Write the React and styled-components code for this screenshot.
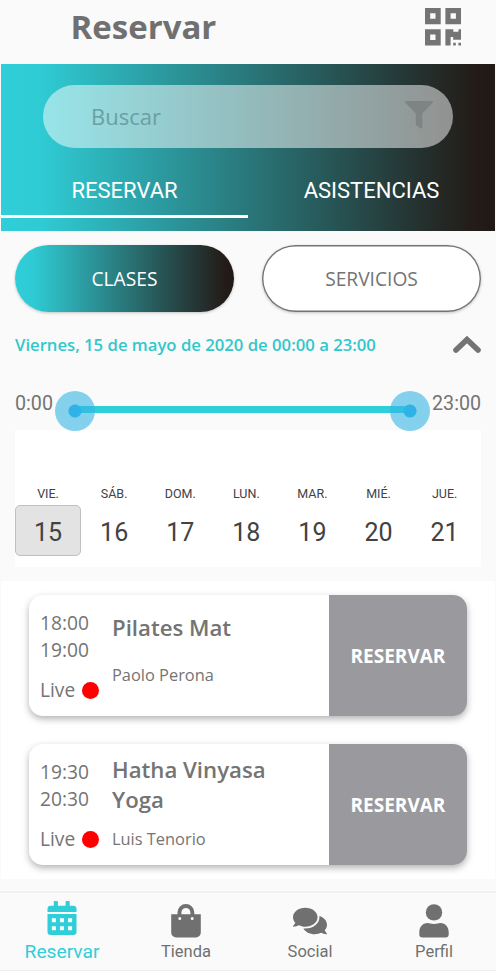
import React, { useState } from 'react';
import styled, { createGlobalStyle } from 'styled-components';
import { FaComments } from 'react-icons/fa';

const GlobalStyle = createGlobalStyle`
  * {
    box-sizing: border-box;
  }

  body {
    margin: 0;
    background-color: #fafafa;
    color: #747474;
    font-family: "Open Sans", "Noto Sans", sans-serif;
  }

  button, input {
    font-family: inherit;
    padding: 0;
    border: none;
    background: none;
    color: inherit;
  }
`;

const roboto = 'Roboto, "Liberation Sans", sans-serif';
const degradado = 'linear-gradient(90deg, #2fced8 0%, #2fcbd4 8%, #231b17 96%, #1f1a17 100%)';

const Pantalla = styled.div`
  width: 100%;
  height: 971px;
  display: flex;
  flex-direction: column;
  overflow: hidden;
`;

const Cabecera = styled.header`
  height: 64px;
  padding: 0 34px 10px 70.5px;
  display: flex;
  justify-content: space-between;
  align-items: center;
`;

const Titulo = styled.h1`
  margin: 0;
  font-size: 33px;
  font-weight: 700;
  line-height: 40px;
  color: #707070;
`;

const BotonIcono = styled.button`
  display: flex;
  color: #747474;
`;

const Banner = styled.section`
  height: 167px;
  margin: 0 1px;
  padding-top: 21px;
  background: ${degradado};
`;

const Buscador = styled.div`
  height: 63px;
  margin: 0 42px;
  padding: 0 20px 0 48px;
  display: flex;
  align-items: center;
  border-radius: 32px;
  background-color: rgba(255, 255, 255, 0.5);

  svg {
    margin-bottom: 3px;
    color: #7d8483;
  }
`;

const Entrada = styled.input`
  flex: 1;
  min-width: 0;
  margin-bottom: 1px;
  font-size: 22px;
  outline: none;

  &::placeholder {
    color: #6aa0a2;
    opacity: 1;
  }
`;

const Pestanas = styled.div`
  display: grid;
  grid-template-columns: 1fr 1fr;
  margin-top: 16px;
`;

const Pestana = styled.button`
  height: 54px;
  padding: 2px 0 0;
  border-bottom: 3px solid ${({ $activa }) => ($activa ? '#fff' : 'transparent')};
  color: #fff;
  font-family: ${roboto};
  font-size: 22px;
`;

const Filtros = styled.div`
  display: grid;
  grid-template-columns: 1fr 1fr;
  gap: 28px;
  margin: 14px 15px 0;
`;

const Filtro = styled.button`
  height: 67px;
  border-radius: 34px;
  background: ${({ $activo }) => ($activo ? degradado : '#fff')};
  color: ${({ $activo }) => ($activo ? '#fff' : '#747474')};
  font-size: 19.2px;
  box-shadow: ${({ $activo }) => ($activo ? '' : 'inset 0 0 0 1.4px #747474,')} 0 1px 3px rgba(0, 0, 0, 0.22);
`;

const FilaFecha = styled.div`
  height: 65px;
  padding: 0 15px;
  display: flex;
  justify-content: space-between;
  align-items: center;
`;

const Fecha = styled.span`
  padding-bottom: 1px;
  color: #30c8cc;
  font-size: 16.7px;
  font-weight: 600;
`;

const Rango = styled.div`
  height: 52px;
  padding: 0 15px;
  display: flex;
  align-items: center;
  justify-content: space-between;
  font-family: ${roboto};
  font-size: 19.7px;
`;

const Hora = styled.span`
  width: ${({ $ancho }) => $ancho};
  text-align: right;
`;

const Deslizador = styled.div`
  position: relative;
  flex: 1;
  height: 7px;
  margin: 12px 22px 0 22px;
  background-color: #2fced8;
`;

const Tirador = styled.span`
  position: absolute;
  top: 5px;
  left: ${({ $posicion }) => $posicion};
  width: 40px;
  height: 40px;
  margin: -20px 0 0 -20px;
  border-radius: 50%;
  background: radial-gradient(circle, #2fb3e6 6px, rgba(53, 181, 229, 0.6) 7px);
`;

const Calendario = styled.div`
  height: 137px;
  margin: 1px 15px 0;
  padding-top: 54px;
  display: grid;
  grid-template-columns: repeat(7, 66.1px);
  align-content: start;
  background-color: #fff;
  font-family: ${roboto};
  color: #424242;
`;

const Dia = styled.div`
  display: flex;
  flex-direction: column;
  align-items: center;
`;

const NombreDia = styled.span`
  height: 21px;
  font-size: 12.5px;
  line-height: 19px;
`;

const NumeroDia = styled.button`
  width: 66px;
  height: 51px;
  padding-top: 3px;
  border: 1px solid ${({ $activo }) => ($activo ? '#c0c0c0' : 'transparent')};
  border-radius: 5px;
  background-color: ${({ $activo }) => ($activo ? '#e3e3e3' : 'transparent')};
  font-size: 25px;
`;

const Lista = styled.main`
  height: 298px;
  margin: 14px 1px 0;
  padding: 14px 28px;
  display: flex;
  flex-direction: column;
  gap: 28px;
  background-color: #fff;
`;

const Tarjeta = styled.article`
  height: 121px;
  display: flex;
  border-radius: 14px;
  background-color: #fff;
  box-shadow: 0 3px 7px rgba(0, 0, 0, 0.3);
  overflow: hidden;
`;

const Horario = styled.div`
  width: 83px;
  padding: 15px 0 0 11px;
  font-size: 19.2px;
  line-height: 26.5px;
`;

const Directo = styled.div`
  display: flex;
  align-items: center;
  gap: 7px;
  margin-top: 14px;
`;

const Punto = styled.span`
  width: 17px;
  height: 17px;
  margin-top: 1px;
  border-radius: 50%;
  background-color: #f00;
`;

const Detalle = styled.div`
  width: 217px;
  padding: 0 40px 15px 0;
  display: flex;
  flex-direction: column;
  justify-content: space-between;
`;

const NombreClase = styled.h2`
  margin: 0;
  padding-top: ${({ $larga }) => ($larga ? '11px' : '18px')};
  font-size: 22.2px;
  font-weight: 600;
  line-height: 30px;
`;

const Profesor = styled.span`
  font-size: 16.4px;
  line-height: 22px;
  margin-bottom: ${({ $larga }) => ($larga ? '0' : '15px')};
`;

const BotonReservar = styled.button`
  flex: 1;
  background-color: #9a999d;
  color: #fff;
  font-size: 19px;
  font-weight: 700;
`;

const Navegacion = styled.nav`
  height: 80px;
  margin-top: 12px;
  border-top: 2px solid #f0f0f0;
  border-bottom: 1px solid #eee;
  display: grid;
  grid-template-columns: repeat(4, 1fr);
`;

const Enlace = styled.a`
  height: 70px;
  display: flex;
  flex-direction: column;
  align-items: center;
  justify-content: flex-end;
  gap: ${({ $activo }) => ($activo ? '5px' : '3px')};
  color: ${({ $activo }) => ($activo ? '#2fced8' : '#707070')};
  font-family: ${roboto};
  font-size: ${({ $activo }) => ($activo ? '19.2px' : '16.5px')};
  line-height: ${({ $activo }) => ($activo ? '23px' : '22px')};
`;

const IconoQr = () => (
    <svg width="37" height="38" viewBox="0 0 37 38" fill="currentColor">
        <path
            fillRule="evenodd"
            d="M0 0h15.7v16.2H0zM5.2 5.3v5.5h5.3V5.3zM20.4 0H36v16.2H20.4zM25.6 5.3v5.5h5.3V5.3zM0 21.2h15.7v16.2H0zM5.2 26.5V32h5.3v-5.5z"
        />
        <path d="M20.4 21.2h7.9v2.6h5.2v-2.6H36v10.500h-7.800v-2.600h-2.600v8.300h-5.200zM28.200 34.800h2.600v2.600h-2.600zM33.400 34.800H36v2.600h-2.600z" />
    </svg>
);

const IconoFiltro = () => (
    <svg width="28" height="28" viewBox="0 0 28 28" fill="currentColor">
        <path d="M1 0h26c1 0 1.3 1 .6 1.7L17.3 12.6v13.8c0 1-.9 1.4-1.7.8l-4-2.8c-.5-.4-.8-.8-.8-1.4V12.6L.4 1.7C-.3 1 0 0 1 0z" />
    </svg>
);

const IconoPlegar = () => (
    <svg width="28" height="19" viewBox="0 0 28 19" fill="none" stroke="currentColor" strokeWidth="5.6" strokeLinecap="round">
        <path d="M3 15 14 4.5 25 15" />
    </svg>
);

const IconoCalendario = () => (
    <svg width="30" height="34" viewBox="0 0 30 34" fill="currentColor">
        <path d="M.5 11V8a3.3 3.3 0 0 1 3.3-3.3h3V1c0-.6.4-1 1-1h2.1c.6 0 1 .4 1 1v3.7h7.7V1c0-.6.4-1 1-1h2.1c.6 0 1 .4 1 1v3.7h3.5A3.3 3.3 0 0 1 29.5 8v3z" />
        <path
            fillRule="evenodd"
            d="M.5 13h29v17.7a3.3 3.3 0 0 1-3.3 3.3H3.8a3.3 3.3 0 0 1-3.3-3.3zM4.8 17.2v4.1h4.1v-4.1zM12.9 17.2v4.1H17v-4.1zM21 17.2v4.1h4.1v-4.1zM4.8 25.2v4.1h4.1v-4.1zM12.9 25.2v4.1H17v-4.1zM21 25.2v4.1h4.1v-4.1z"
        />
    </svg>
);

const IconoBolsa = () => (
    <svg width="30" height="34" viewBox="0 0 30 34" fill="currentColor">
        <path
            fillRule="evenodd"
            d="M.2 10.3h6.3V8.5a8.4 8.4 0 0 1 16.8 0v1.8h6.5v18.2a5 5 0 0 1-5 5H5.2a5 5 0 0 1-5-5zM10.4 10.3h9V8.5a4.5 4.5 0 0 0-9 0zM8.8 13.1a1.5 1.5 0 1 0 0 3 1.5 1.5 0 0 0 0-3zM21.2 13.1a1.5 1.5 0 1 0 0 3 1.5 1.5 0 0 0 0-3z"
        />
    </svg>
);

const IconoPerfil = () => (
    <svg width="30" height="34" viewBox="0 0 30 34" fill="currentColor">
        <circle cx="15" cy="8.4" r="8.2" />
        <path d="M8.6 18.9c2 0 3.2 1 6.4 1s4.4-1 6.4-1c5 0 8.3 4.2 8.3 9v2.3a3.2 3.2 0 0 1-3.2 3.2h-23a3.2 3.2 0 0 1-3.2-3.2v-2.3c0-4.8 3.3-9 8.3-9z" />
    </svg>
);

const IconoSocial = () => <FaComments size={34} />;

const dias = [
    { nombre: 'VIE.', numero: 15 },
    { nombre: 'SÁB.', numero: 16 },
    { nombre: 'DOM.', numero: 17 },
    { nombre: 'LUN.', numero: 18 },
    { nombre: 'MAR.', numero: 19 },
    { nombre: 'MIÉ.', numero: 20 },
    { nombre: 'JUE.', numero: 21 },
];

const clases = [
    { inicio: '18:00', fin: '19:00', nombre: 'Pilates Mat', profesor: 'Paolo Perona' },
    { inicio: '19:30', fin: '20:30', nombre: 'Hatha Vinyasa Yoga', profesor: 'Luis Tenorio' },
];

const enlaces = [
    { texto: 'Reservar', Icono: IconoCalendario },
    { texto: 'Tienda', Icono: IconoBolsa },
    { texto: 'Social', Icono: IconoSocial },
    { texto: 'Perfil', Icono: IconoPerfil },
];

function TarjetaClase({ clase }) {
    // los nombres largos ocupan dos líneas
    const larga = clase.nombre.length > 14;

    return (
        <Tarjeta>
            <Horario>
                <div>{clase.inicio}</div>
                <div>{clase.fin}</div>
                <Directo>Live <Punto /></Directo>
            </Horario>
            <Detalle>
                <NombreClase $larga={larga}>{clase.nombre}</NombreClase>
                <Profesor $larga={larga}>{clase.profesor}</Profesor>
            </Detalle>
            <BotonReservar>RESERVAR</BotonReservar>
        </Tarjeta>
    );
}

function App() {
    const [pestana, setPestana] = useState('RESERVAR');
    const [filtro, setFiltro] = useState('CLASES');
    const [dia, setDia] = useState(15);

    return (
        <Pantalla>
            <GlobalStyle />
            <Cabecera>
                <Titulo>Reservar</Titulo>
                <BotonIcono aria-label="Código QR"><IconoQr /></BotonIcono>
            </Cabecera>

            <Banner>
                <Buscador>
                    <Entrada placeholder="Buscar" />
                    <IconoFiltro />
                </Buscador>
                <Pestanas>
                    {['RESERVAR', 'ASISTENCIAS'].map(p => (
                        <Pestana key={p} $activa={p === pestana} onClick={() => setPestana(p)}>{p}</Pestana>
                    ))}
                </Pestanas>
            </Banner>

            <Filtros>
                {['CLASES', 'SERVICIOS'].map(f => (
                    <Filtro key={f} $activo={f === filtro} onClick={() => setFiltro(f)}>{f}</Filtro>
                ))}
            </Filtros>

            <FilaFecha>
                <Fecha>Viernes, 15 de mayo de 2020 de 00:00 a 23:00</Fecha>
                <BotonIcono aria-label="Plegar"><IconoPlegar /></BotonIcono>
            </FilaFecha>

            <Rango>
                <Hora $ancho="38px">0:00</Hora>
                <Deslizador>
                    <Tirador $posicion="0" />
                    <Tirador $posicion="100%" />
                </Deslizador>
                <Hora $ancho="49px">23:00</Hora>
            </Rango>

            <Calendario>
                {dias.map(d => (
                    <Dia key={d.numero}>
                        <NombreDia>{d.nombre}</NombreDia>
                        <NumeroDia $activo={d.numero === dia} onClick={() => setDia(d.numero)}>{d.numero}</NumeroDia>
                    </Dia>
                ))}
            </Calendario>

            <Lista>
                {clases.map(c => <TarjetaClase key={c.inicio} clase={c} />)}
            </Lista>

            <Navegacion>
                {enlaces.map(({ texto, Icono }, i) => (
                    <Enlace key={texto} $activo={i === 0}>
                        <Icono />
                        {texto}
                    </Enlace>
                ))}
            </Navegacion>
        </Pantalla>
    );
}

export default App;
